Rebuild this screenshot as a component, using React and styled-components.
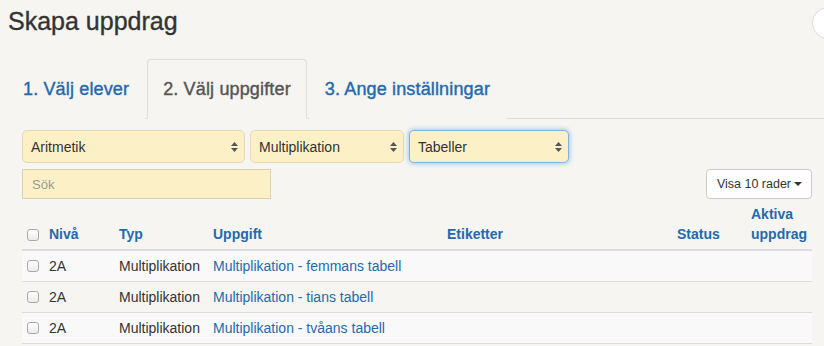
import React from "react";
import styled, { createGlobalStyle } from "styled-components";

const GlobalStyle = createGlobalStyle`
  body {
    margin: 0;
    background: #f6f5f1;
    font-family: "Liberation Sans", Arial, sans-serif;
    color: #333;
    overflow: hidden;
  }
`;

const Page = styled.div`
  width: 824px;
  height: 346px;
  overflow: hidden;
`;

const TitleBar = styled.header`
  height: 59px;
  display: flex;
  justify-content: space-between;
  align-items: flex-start;
`;

const Title = styled.h1`
  margin: 6px 0 0 8px;
  font-size: 25px;
  line-height: 30px;
  font-weight: normal;
  color: #333;
  -webkit-text-stroke: 0.35px #333;
`;

const Avatar = styled.div`
  width: 32px;
  height: 32px;
  margin: 7px -20px 0 0;
  border-radius: 50%;
  background: #fff;
  border: 1px solid #dcdcdc;
  box-sizing: border-box;
`;

const Tabs = styled.ul`
  display: flex;
  margin: 0 0 0 7px;
  padding: 0;
  list-style: none;
  border-bottom: 1px solid #ddd;
`;

const Tab = styled.li`
  margin: 0 2px -1px 0;
  padding: 18px 15px;
  font-size: 18px;
  line-height: 22px;
  letter-spacing: 0.15px;
  border: 1px solid ${(p) => (p.$active ? "#ddd" : "transparent")};
  border-bottom-color: transparent;
  border-radius: 4px 4px 0 0;
  background: #f6f5f1;
  color: ${(p) => (p.$active ? "#555" : "#2569ad")};
  -webkit-text-stroke: 0.4px currentColor;
  cursor: pointer;
`;

const Pane = styled.section`
  padding: 11px 12px 0 22px;
`;

const FilterRow = styled.div`
  display: flex;
  gap: 5px;
  margin-bottom: 6px;
`;

const SelectBox = styled.div`
  width: ${(p) => p.$width}px;
  height: 33px;
  box-sizing: border-box;
  display: flex;
  align-items: center;
  justify-content: space-between;
  padding: 0 6px 0 8px;
  background: #fcf1c6;
  border: 1px solid ${(p) => (p.$focused ? "#7fb3e3" : "#e4dab0")};
  border-radius: 5px;
  box-shadow: ${(p) =>
    p.$focused ? "0 0 4px 1px rgba(102, 175, 233, 0.6)" : "none"};
  font-size: 14px;
  color: #333;
`;

const ToolRow = styled.div`
  display: flex;
  justify-content: space-between;
  align-items: center;
`;

const Search = styled.input`
  width: 249px;
  height: 30px;
  box-sizing: border-box;
  padding: 0 9px;
  margin: 0;
  background: #fcf1c6;
  border: 1px solid #dcd2a8;
  font-family: inherit;
  font-size: 13px;
  outline: none;

  &::placeholder {
    color: #999;
  }
`;

const PageSizeButton = styled.button`
  height: 30px;
  padding: 0 9px 0 10px;
  display: flex;
  align-items: center;
  gap: 3px;
  background: #fff;
  border: 1px solid #ccc;
  border-radius: 4px;
  font-family: inherit;
  font-size: 12.5px;
  color: #333;
`;

const Caret = styled.span`
  width: 0;
  height: 0;
  border-left: 4px solid transparent;
  border-right: 4px solid transparent;
  border-top: 4px solid #333;
`;

const Table = styled.table`
  width: 790px;
  table-layout: fixed;
  border-collapse: collapse;
  font-size: 14px;
  line-height: 20px;
`;

const Th = styled.th`
  width: ${(p) => p.$width}px;
  padding: 5px 2px 5px 4px;
  text-align: left;
  vertical-align: bottom;
  font-weight: bold;
  color: #2569ad;
  border-bottom: 2px solid #ddd;
`;

const Row = styled.tr`
  background: ${(p) => (p.$striped ? "#f9f9f9" : "transparent")};
`;

const Td = styled.td`
  padding: 5px 4px;
  border-bottom: 1px solid #ddd;
  white-space: nowrap;
  color: #333;
`;

const CheckCell = styled.td`
  width: ${(p) => (p.$head ? "18px" : "auto")};
  padding: 5px 0 5px 5px;
  border-bottom: ${(p) => (p.$head ? "2px" : "1px")} solid #ddd;
  vertical-align: ${(p) => (p.$head ? "bottom" : "middle")};
`;

const Check = styled.input`
  appearance: none;
  display: block;
  width: 12px;
  height: 12px;
  margin: ${(p) => (p.$head ? "0 0 3px" : "0")};
  border: 1px solid #a9a9a9;
  border-radius: 3px;
  background: linear-gradient(#fff, #ececec);
  box-sizing: border-box;
`;

const TaskLink = styled.a`
  color: #2569ad;
  text-decoration: none;
`;

function SelectArrows() {
  return (
    <svg width="7" height="10" viewBox="0 0 7 10">
      <path d="M3.5 0 L7 4 L0 4 Z M0 6 L7 6 L3.5 10 Z" fill="#555" />
    </svg>
  );
}

function Select({ value, width, focused }) {
  return (
    <SelectBox $width={width} $focused={focused}>
      <span>{value}</span>
      <SelectArrows />
    </SelectBox>
  );
}

const columns = [
  { label: "Nivå", width: 64 },
  { label: "Typ", width: 88 },
  { label: "Uppgift", width: 228 },
  { label: "Etiketter", width: 224 },
  { label: "Status", width: 68 },
  { label: "Aktiva uppdrag", width: 59 },
];

const tasks = [
  { level: "2A", type: "Multiplikation", name: "Multiplikation - femmans tabell" },
  { level: "2A", type: "Multiplikation", name: "Multiplikation - tians tabell" },
  { level: "2A", type: "Multiplikation", name: "Multiplikation - tvåans tabell" },
];

export default function App() {
  return (
    <Page>
      <GlobalStyle />
      <TitleBar>
        <Title>Skapa uppdrag</Title>
        <Avatar />
      </TitleBar>
      <Tabs>
        <Tab>1. Välj elever</Tab>
        <Tab $active>2. Välj uppgifter</Tab>
        <Tab>3. Ange inställningar</Tab>
      </Tabs>
      <Pane>
        <FilterRow>
          <Select value="Aritmetik" width={223} />
          <Select value="Multiplikation" width={154} />
          <Select value="Tabeller" width={160} focused />
        </FilterRow>
        <ToolRow>
          <Search placeholder="Sök" />
          <PageSizeButton>
            Visa 10 rader <Caret />
          </PageSizeButton>
        </ToolRow>
        <Table>
          <thead>
            <tr>
              <CheckCell as="th" $head>
                <Check type="checkbox" $head />
              </CheckCell>
              {columns.map((c) => (
                <Th key={c.label} $width={c.width}>
                  {c.label}
                </Th>
              ))}
            </tr>
          </thead>
          <tbody>
            {tasks.map((t, i) => (
              <Row key={t.name} $striped={i % 2 === 0}>
                <CheckCell>
                  <Check type="checkbox" />
                </CheckCell>
                <Td>{t.level}</Td>
                <Td>{t.type}</Td>
                <Td>
                  <TaskLink href="#">{t.name}</TaskLink>
                </Td>
                <Td />
                <Td />
                <Td />
              </Row>
            ))}
          </tbody>
        </Table>
      </Pane>
    </Page>
  );
}
